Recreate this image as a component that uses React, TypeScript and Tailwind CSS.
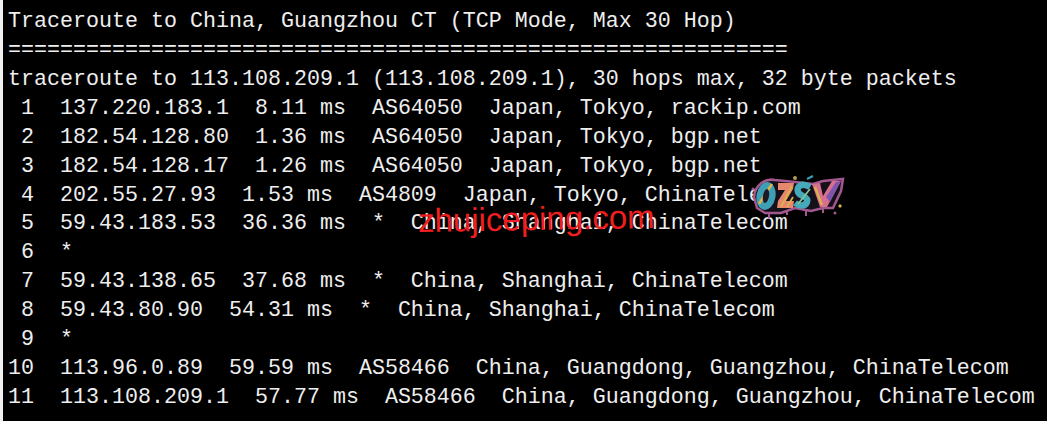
const lines = [
  "Traceroute to China, Guangzhou CT (TCP Mode, Max 30 Hop)",
  "============================================================",
  "traceroute to 113.108.209.1 (113.108.209.1), 30 hops max, 32 byte packets",
  " 1  137.220.183.1  8.11 ms  AS64050  Japan, Tokyo, rackip.com",
  " 2  182.54.128.80  1.36 ms  AS64050  Japan, Tokyo, bgp.net",
  " 3  182.54.128.17  1.26 ms  AS64050  Japan, Tokyo, bgp.net",
  " 4  202.55.27.93  1.53 ms  AS4809  Japan, Tokyo, ChinaTelecom",
  " 5  59.43.183.53  36.36 ms  *  China, Shanghai, ChinaTelecom",
  " 6  *",
  " 7  59.43.138.65  37.68 ms  *  China, Shanghai, ChinaTelecom",
  " 8  59.43.80.90  54.31 ms  *  China, Shanghai, ChinaTelecom",
  " 9  *",
  "10  113.96.0.89  59.59 ms  AS58466  China, Guangdong, Guangzhou, ChinaTelecom",
  "11  113.108.209.1  57.77 ms  AS58466  China, Guangdong, Guangzhou, ChinaTelecom",
];

function OzsvLogo() {
  return (
    <svg width="96" height="50" viewBox="0 0 96 50" className="absolute left-[751px] top-[175px]">
      {/* pink outline behind the letters */}
      <path d="M3 22 C4 10 14 3 24 5 L44 7 L62 9 L72 6 L92 4 L90 16 L82 33 L72 33 L60 36 L44 33 L30 38 L14 38 L6 33 Z" fill="#15101a" stroke="#a2588f" strokeWidth="2.5" />
      {/* O */}
      <ellipse cx="15" cy="21" rx="9.5" ry="14" fill="#3f9fb4" transform="rotate(10 15 21)" />
      <path d="M8 29 L21 9" stroke="#d9b44a" strokeWidth="2.5" />
      <ellipse cx="15" cy="21" rx="3" ry="7" fill="#1d1a26" transform="rotate(10 15 21)" />
      {/* Z */}
      <path d="M27 8 L43 8 L42 14 L35 26 L43 26 L42 33 L26 33 L27 26 L34 15 L27 15 Z" fill="#e8866e" />
      <path d="M30 32 L41 11 M36 32 L42 22" stroke="#d9b44a" strokeWidth="1.8" />
      {/* S */}
      <path d="M59 12 C50 7 45 12 47 17 C49 22 58 21 56 27 C54 32 48 31 44 28" fill="none" stroke="#45a9ba" strokeWidth="6.5" />
      <path d="M47 29 L59 14" stroke="#86c690" strokeWidth="1.8" />
      {/* V */}
      <path d="M61 9 L69 8 L72 21 L81 6 L90 6 L76 32 L69 32 Z" fill="#d96f8f" />
      <path d="M64 12 L71 30" stroke="#d9b44a" strokeWidth="2.2" />
      <path d="M75 22 L85 7 L90 6 L79 27 Z" fill="#7e55ad" />
      {/* splatter and drips */}
      <circle cx="44" cy="3" r="2" fill="#b59a4a" />
      <path d="M56 4 L62 1" stroke="#3d9db5" strokeWidth="2" />
      <path d="M87 31 L89 29 L91 31 L89 33 Z" fill="#d9b44a" />
      <circle cx="84" cy="38" r="1.5" fill="#a2588f" />
      <circle cx="2" cy="14" r="1.5" fill="#a2588f" />
      <path d="M18 39 L18 43 M36 36 L36 40 M55 36 L55 41 M72 34 L72 38" stroke="#a2588f" strokeWidth="2" />
    </svg>
  );
}

export default function App() {
  return (
    <div className="relative h-[421px] w-[1047px] overflow-hidden bg-black">
      <div className="h-full border-l-[3px] border-[#f0f0f0] pt-[8px] pl-[5px] font-['Liberation_Mono',monospace] text-[21.67px] leading-[28.92px] text-[#eeeeee] whitespace-pre">
        {lines.map((line, i) => (
          <div key={i}>{line}</div>
        ))}
      </div>
      <OzsvLogo />
      <div className="absolute left-[418px] top-[197px] font-['Liberation_Sans',sans-serif] text-[33px] leading-[44px] text-[#f01e1e] -rotate-1">
        zhujiceping.com
      </div>
    </div>
  );
}
